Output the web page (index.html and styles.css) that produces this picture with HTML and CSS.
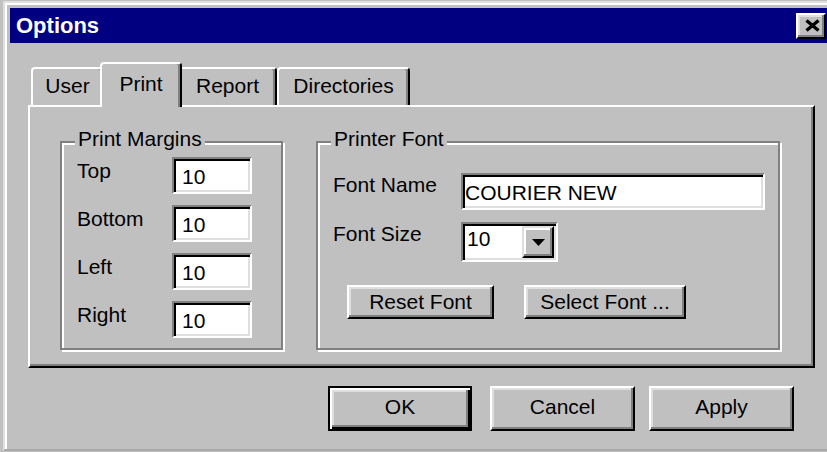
FILE: index.html
```html
<!DOCTYPE html>
<html lang="en">
<head>
<meta charset="utf-8">
<title>Options</title>
<link rel="stylesheet" href="styles.css">
</head>
<body>
<div class="window">
  <div class="titlebar">
    <span class="title">Options</span>
    <button class="close" type="button" aria-label="Close">
      <svg width="15" height="13" viewBox="0 0 15 13" aria-hidden="true">
        <path d="M1.5 1.5 L13.5 11.5 M13.5 1.5 L1.5 11.5" stroke="#000" stroke-width="3.4" fill="none"/>
      </svg>
    </button>
  </div>

  <div class="content">
    <div class="tabs">
      <div class="tab tab-user">User</div>
      <div class="tab tab-print active">Print</div>
      <div class="tab tab-report">Report</div>
      <div class="tab tab-dirs">Directories</div>
    </div>

    <div class="panel">
      <div class="group margins">
        <span class="legend">Print Margins</span>
        <div class="row">
          <label class="label margin-label">Top</label>
          <input class="field margin-field" type="text" value="10">
        </div>
        <div class="row">
          <label class="label margin-label">Bottom</label>
          <input class="field margin-field" type="text" value="10">
        </div>
        <div class="row">
          <label class="label margin-label">Left</label>
          <input class="field margin-field" type="text" value="10">
        </div>
        <div class="row">
          <label class="label margin-label">Right</label>
          <input class="field margin-field" type="text" value="10">
        </div>
      </div>

      <div class="group printer-font">
        <span class="legend">Printer Font</span>
        <div class="row">
          <label class="label font-label">Font Name</label>
          <input class="field name-field" type="text" value="COURIER NEW">
        </div>
        <div class="row size-row">
          <label class="label font-label">Font Size</label>
          <div class="combo">
            <span class="combo-value">10</span>
            <span class="combo-btn">
              <svg width="13" height="7" viewBox="0 0 13 7" aria-hidden="true">
                <path d="M0 0 H13 L6.5 7 Z" fill="#000"/>
              </svg>
            </span>
          </div>
        </div>
        <div class="font-buttons">
          <button class="btn reset-btn" type="button">Reset Font</button>
          <button class="btn select-btn" type="button">Select Font ...</button>
        </div>
      </div>
    </div>

    <div class="actions">
      <button class="btn action-btn default" type="button">OK</button>
      <button class="btn action-btn" type="button">Cancel</button>
      <button class="btn action-btn" type="button">Apply</button>
    </div>
  </div>
</div>
</body>
</html>
```

FILE: styles.css
```css
html, body {
  margin: 0;
  padding: 0;
  width: 827px;
  height: 452px;
  overflow: hidden;
  background: #c0c0c0;
}

body {
  font-family: "Liberation Sans", Arial, sans-serif;
  font-size: 21px;
  line-height: 24px;
  color: #000;
}

/* dialog frame */
.window {
  margin: 1px 0 0 3px;
  width: 840px;
  height: 450px;
  box-sizing: border-box;
  border-top: 2px solid #dfdfdf;
  border-left: 2px solid #dfdfdf;
  border-bottom: 2px solid #a8a8a8;
  box-shadow: inset 2px 2px 0 #fff;
  padding: 5px 0 0 5px;
  background: #c0c0c0;
}

.titlebar {
  width: 819px;
  height: 35px;
  background: #000080;
  display: flex;
  align-items: center;
  justify-content: space-between;
  padding: 0 3px 0 6px;
  box-sizing: border-box;
}

.title {
  color: #fff;
  font-weight: bold;
  font-size: 22px;
}

.close {
  width: 30px;
  height: 26px;
  padding: 0;
  margin: 0;
  box-sizing: border-box;
  background: #c0c0c0;
  border: 2px solid;
  border-color: #fff #000 #000 #fff;
  box-shadow: inset -2px -2px 0 #808080, inset 2px 2px 0 #dfdfdf;
  display: flex;
  align-items: center;
  justify-content: center;
}

.close svg {
  display: block;
  margin-left: 2px;
}

.content {
  padding-left: 18px;
}

/* tab strip */
.tabs {
  margin-top: 19px;
  height: 43px;
  display: flex;
  align-items: flex-end;
  padding-left: 3px;
  position: relative;
  z-index: 1;
}

.tab {
  flex-shrink: 0;
  height: 38px;
  box-sizing: border-box;
  border: 2px solid;
  border-bottom: none;
  border-color: #fff #000 transparent #fff;
  border-radius: 4px 4px 0 0;
  box-shadow: inset -2px 0 0 #808080;
  padding-top: 5px;
  text-align: center;
  background: #c0c0c0;
}

.tab-user { width: 73px; }
.tab-report { width: 99px; }
.tab-dirs { width: 133px; }

.tab.active {
  width: 82px;
  height: 45px;
  margin: 0 -4px -2px;
  padding-top: 8px;
  position: relative;
  z-index: 2;
}

/* tab page */
.panel {
  width: 787px;
  height: 263px;
  box-sizing: border-box;
  border: 2px solid;
  border-color: #fff #000 #000 #fff;
  box-shadow: inset -2px -2px 0 #808080;
  padding: 34px 0 0 30px;
  display: flex;
  align-items: flex-start;
  gap: 33px;
}

.group {
  position: relative;
  height: 209px;
  box-sizing: border-box;
  border: 2px solid #808080;
  box-shadow: inset 2px 2px 0 #fff, 2px 2px 0 #fff;
}

.legend {
  position: absolute;
  top: -16px;
  left: 13px;
  padding: 0 3px;
  background: #c0c0c0;
  white-space: nowrap;
}

.margins {
  width: 223px;
  padding: 14px 0 0 15px;
  display: flex;
  flex-direction: column;
  gap: 11px;
}

.printer-font {
  width: 464px;
  padding: 30px 0 0 15px;
}

.row {
  display: flex;
  align-items: flex-start;
}

.label {
  flex-shrink: 0;
  margin-top: 2px;
  white-space: nowrap;
}

.margin-label { width: 95px; }
.font-label { width: 128px; margin-top: 0; }

/* sunken edit fields */
.field {
  appearance: none;
  margin: 0;
  height: 37px;
  box-sizing: border-box;
  border: 2px solid;
  border-color: #808080 #fff #fff #808080;
  box-shadow: inset 2px 2px 0 #000, inset -2px -2px 0 #dfdfdf;
  background: #fff;
  font: 21px/24px "Liberation Sans", Arial, sans-serif;
  color: #000;
  padding: 3px 0 0 8px;
  outline: none;
  border-radius: 0;
}

.margin-field { width: 80px; }
.name-field { width: 304px; padding-left: 2px; }

.size-row { margin-top: 12px; }

.combo {
  width: 97px;
  height: 40px;
  box-sizing: border-box;
  border: 2px solid;
  border-color: #808080 #fff #fff #808080;
  box-shadow: inset 2px 2px 0 #000, inset -2px -2px 0 #dfdfdf;
  background: #fff;
  padding: 2px;
  display: flex;
}

.combo-value {
  flex: 1;
  padding: 1px 0 0 2px;
}

.combo-btn {
  width: 32px;
  box-sizing: border-box;
  background: #c0c0c0;
  border: 2px solid;
  border-color: #dfdfdf #000 #000 #dfdfdf;
  box-shadow: inset -2px -2px 0 #808080, inset 2px 2px 0 #fff;
  display: flex;
  align-items: center;
  justify-content: center;
}

.combo-btn svg { display: block; }

/* raised push buttons */
.btn {
  font: 21px/24px "Liberation Sans", Arial, sans-serif;
  color: #000;
  background: #c0c0c0;
  border: 2px solid;
  border-color: #fff #000 #000 #fff;
  box-shadow: inset -2px -2px 0 #808080, inset 2px 2px 0 #dfdfdf;
  box-sizing: border-box;
  padding: 0;
  margin: 0;
  white-space: nowrap;
}

.font-buttons {
  margin: 23px 0 0 14px;
  display: flex;
  gap: 30px;
}

.reset-btn { width: 147px; height: 34px; }
.select-btn { width: 162px; height: 34px; }

.actions {
  width: 787px;
  box-sizing: border-box;
  margin-top: 18px;
  padding-right: 21px;
  display: flex;
  justify-content: flex-end;
  gap: 14px;
}

.action-btn {
  width: 145px;
  height: 45px;
  padding-bottom: 4px;
}

.action-btn.default {
  width: 144px;
  margin-right: 4px;
  border-color: #000;
  box-shadow: inset 2px 2px 0 #fff, inset -2px -2px 0 #000,
              inset -4px -4px 0 #808080, inset 4px 4px 0 #dfdfdf;
}
```
